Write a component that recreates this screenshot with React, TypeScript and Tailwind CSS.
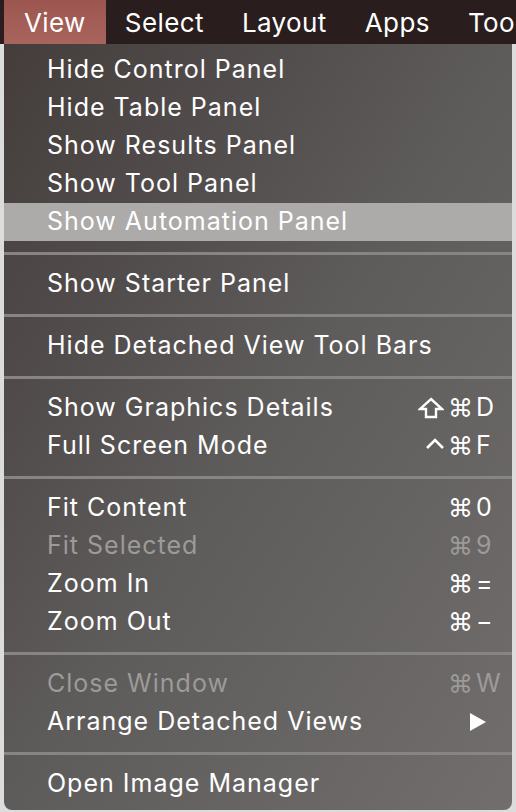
import { Fragment } from "react";

type Item = {
  label: string;
  mods?: ("shift" | "ctrl" | "cmd")[];
  keyChar?: string;
  disabled?: boolean;
  active?: boolean;
  submenu?: boolean;
};

// groups are split by separators
const GROUPS: Item[][] = [
  [
    { label: "Hide Control Panel" },
    { label: "Hide Table Panel" },
    { label: "Show Results Panel" },
    { label: "Show Tool Panel" },
    { label: "Show Automation Panel", active: true },
  ],
  [{ label: "Show Starter Panel" }],
  [{ label: "Hide Detached View Tool Bars" }],
  [
    { label: "Show Graphics Details", mods: ["shift", "cmd"], keyChar: "D" },
    { label: "Full Screen Mode", mods: ["ctrl", "cmd"], keyChar: "F" },
  ],
  [
    { label: "Fit Content", mods: ["cmd"], keyChar: "0" },
    { label: "Fit Selected", mods: ["cmd"], keyChar: "9", disabled: true },
    { label: "Zoom In", mods: ["cmd"], keyChar: "=" },
    { label: "Zoom Out", mods: ["cmd"], keyChar: "−" },
  ],
  [
    { label: "Close Window", mods: ["cmd"], keyChar: "W", disabled: true },
    { label: "Arrange Detached Views", submenu: true },
  ],
  [{ label: "Open Image Manager" }],
];

const MENUBAR = ["Select", "Layout", "Apps", "Tools"];

function Mod({ kind }: { kind: "shift" | "ctrl" | "cmd" }) {
  if (kind === "shift")
    return (
      <svg width="26" height="22" viewBox="0 0 26 22" className="mr-[4px]">
        <path
          d="M13 2 L24 12 L18 12 L18 20 L8 20 L8 12 L2 12 Z"
          fill="none"
          stroke="currentColor"
          strokeWidth="2.4"
          strokeLinejoin="miter"
        />
      </svg>
    );
  if (kind === "ctrl")
    return (
      <svg width="18" height="22" viewBox="0 0 18 22" className="mr-[4px]">
        <path d="M1 13 L9 5 L17 13" fill="none" stroke="currentColor" strokeWidth="2.6" />
      </svg>
    );
  return <span className="font-['DejaVu_Sans',sans-serif] text-[25px] leading-none">⌘</span>;
}

function MenuRow({ item }: { item: Item }) {
  const color = item.disabled ? "text-[#9d9a99]" : "text-white";
  return (
    <div
      className={`flex h-[38px] items-center pl-[43px] pr-[12px] ${
        item.active ? "bg-[#adaaaa]" : ""
      } ${color}`}
    >
      <span className="flex-1 whitespace-nowrap">{item.label}</span>
      {item.mods && (
        <span className="flex items-center">
          {item.mods.map((m) => (
            <Mod key={m} kind={m} />
          ))}
          <span className="w-[26px] pl-[2px]">{item.keyChar}</span>
        </span>
      )}
      {item.submenu && (
        <svg width="18" height="18" viewBox="0 0 18 18" className="mr-[13px]">
          <path d="M1 0 L17 9 L1 18 Z" fill="white" />
        </svg>
      )}
    </div>
  );
}

export default function App() {
  return (
    <div className="relative h-[812px] w-[516px] overflow-hidden bg-[#dcdcdc] font-['Inter',sans-serif]">
      <div className="flex h-[44px] items-stretch bg-[#2a1d1d] text-[26px] tracking-[0.4px] text-white">
        <div className="ml-[4px] flex items-center bg-linear-to-b from-[#9c564f] to-[#a8655d] px-[20px]">
          View
        </div>
        {MENUBAR.map((m) => (
          <div key={m} className="flex items-center whitespace-nowrap px-[19px]">
            {m}
          </div>
        ))}
      </div>
      <div className="ml-[4px] w-[508px] rounded-b-[8px] bg-linear-to-br from-[#443d3c] via-[#5e5b5b] to-[#716e6d] pt-[7px] pb-[7px] text-[25px] tracking-[1px]">
        {GROUPS.map((g, gi) => (
          <Fragment key={gi}>
            {gi > 0 && (
              <div className="flex h-[24px] items-center">
                <div className="h-[3px] w-full bg-[#878484]" />
              </div>
            )}
            {g.map((it) => (
              <MenuRow key={it.label} item={it} />
            ))}
          </Fragment>
        ))}
      </div>
    </div>
  );
}
